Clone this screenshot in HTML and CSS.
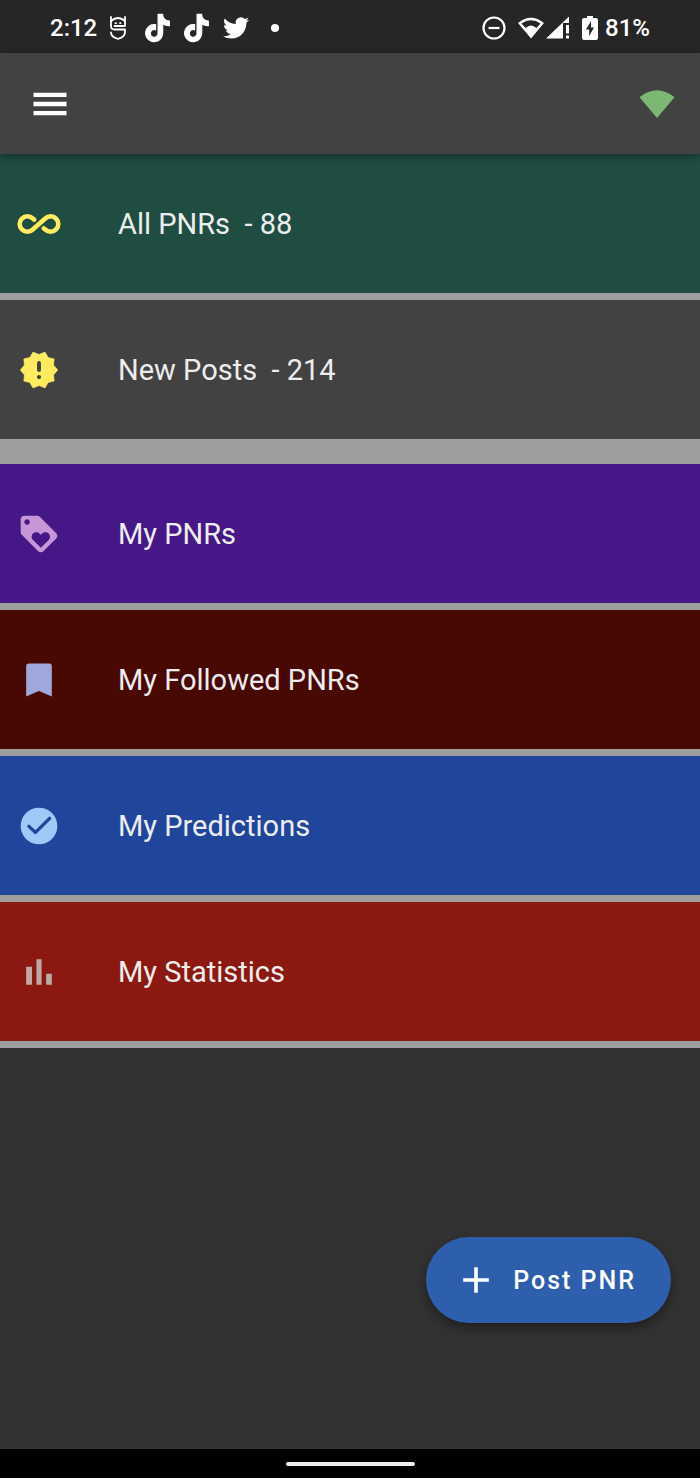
FILE: index.html
```html
<!DOCTYPE html>
<html lang="en">
<head>
<meta charset="utf-8">
<meta name="viewport" content="width=device-width, initial-scale=1">
<title>PNRs</title>
<link rel="stylesheet" href="styles.css">
</head>
<body>
<div class="status">
  <div class="status-left">
    <span class="clock">2:12</span>
    <svg class="helmet" viewBox="0 0 18 24" fill="none" stroke="#fff" stroke-width="1.800" stroke-linejoin="round" stroke-linecap="round"><path d="M2 1v9q0 3.500 3.500 3.500H16V16q0 5-7 6.800Q2 21 2 16.500"/><path d="M2 5Q9-1 16 5V1M16 5v5H5.500"/><path d="M6.500 7.200h.500M11 7.200h.500"/></svg>
    <svg class="tiktok" viewBox="1 0 22 24"><path d="M12.525.02c1.31-.02 2.61-.01 3.91-.02.08 1.53.63 3.09 1.75 4.17 1.12 1.11 2.7 1.62 4.24 1.79v4.03c-1.44-.05-2.89-.35-4.2-.97-.57-.26-1.1-.59-1.62-.93-.01 2.92.01 5.84-.02 8.75-.08 1.4-.54 2.79-1.35 3.94-1.31 1.92-3.58 3.17-5.91 3.21-1.43.08-2.86-.31-4.08-1.03-2.02-1.19-3.44-3.37-3.65-5.71-.02-.5-.03-1-.01-1.49.18-1.9 1.12-3.72 2.58-4.96 1.66-1.44 3.98-2.13 6.15-1.72.02 1.48-.04 2.96-.04 4.44-.99-.32-2.15-.23-3.02.37-.63.41-1.11 1.04-1.36 1.75-.21.51-.15 1.07-.14 1.61.24 1.64 1.82 3.02 3.5 2.87 1.12-.01 2.19-.66 2.77-1.61.19-.33.4-.67.41-1.06.1-1.79.06-3.57.07-5.36.01-4.03-.01-8.05.02-12.07z"/></svg>
    <svg class="tiktok" viewBox="1 0 22 24"><path d="M12.525.02c1.31-.02 2.61-.01 3.91-.02.08 1.53.63 3.09 1.75 4.17 1.12 1.11 2.7 1.62 4.24 1.79v4.03c-1.44-.05-2.89-.35-4.2-.97-.57-.26-1.1-.59-1.62-.93-.01 2.92.01 5.84-.02 8.75-.08 1.4-.54 2.79-1.35 3.94-1.31 1.92-3.58 3.17-5.91 3.21-1.43.08-2.86-.31-4.08-1.03-2.02-1.19-3.44-3.37-3.65-5.71-.02-.5-.03-1-.01-1.49.18-1.9 1.12-3.72 2.58-4.96 1.66-1.44 3.98-2.13 6.15-1.72.02 1.48-.04 2.96-.04 4.44-.99-.32-2.15-.23-3.02.37-.63.41-1.11 1.04-1.36 1.75-.21.51-.15 1.07-.14 1.61.24 1.64 1.82 3.02 3.5 2.87 1.12-.01 2.19-.66 2.77-1.61.19-.33.4-.67.41-1.06.1-1.79.06-3.57.07-5.36.01-4.03-.01-8.05.02-12.07z"/></svg>
    <svg class="bird" viewBox="0 0 24 24" fill="#fff"><path d="M23.953 4.57a10 10 0 01-2.825.775 4.958 4.958 0 002.163-2.723c-.951.555-2.005.959-3.127 1.184a4.92 4.92 0 00-8.384 4.482C7.69 8.095 4.067 6.13 1.64 3.162a4.822 4.822 0 00-.666 2.475c0 1.71.87 3.213 2.188 4.096a4.904 4.904 0 01-2.228-.616v.06a4.923 4.923 0 003.946 4.827 4.996 4.996 0 01-2.212.085 4.936 4.936 0 004.604 3.417 9.867 9.867 0 01-6.102 2.105c-.39 0-.779-.023-1.17-.067a13.995 13.995 0 007.557 2.209c9.053 0 13.998-7.496 13.998-13.985 0-.21 0-.42-.015-.63A9.935 9.935 0 0024 4.59z"/></svg>
    <span class="dot"></span>
  </div>
  <div class="status-right">
    <svg class="dnd" viewBox="0 0 24 24" fill="none" stroke="#fff" stroke-width="2.200"><circle cx="12" cy="12" r="10.500"/><path d="M6.500 12h11"/></svg>
    <svg class="signals" viewBox="0 0 54 24"><path d="M1 7Q14-3.500 27 7L14 22.500z" fill="#fff"/><path d="M4.500 7.500Q14 1 23.500 7.500L19.500 12Q14 7 8.500 12z" fill="#262626"/><path d="M29 22.500 52 .5V7h-6v15.500z" fill="#fff"/><path d="M49 9h3v8.500h-3zM49 19.500h3v3h-3z" fill="#fff"/></svg>
    <svg class="battery" viewBox="0 0 16 24"><path d="M5 0h6v2h3q2 0 2 2v18q0 2-2 2H2q-2 0-2-2V4q0-2 2-2h3z" fill="#fff"/><path d="M9 5 4 13.500h3.200V20L12 11.500H9z" fill="#262626"/></svg>
    <span class="level">81%</span>
  </div>
</div>

<header class="bar">
  <button class="menu" type="button" aria-label="Menu"><svg class="icon" viewBox="0 0 24 24" fill="#fff"><path d="M3 5.800h18v2.400H3zM3 10.800h18v2.400H3zM3 15.800h18v2.400H3z"/></svg></button>
  <svg class="wedge" viewBox="0 0 36 30" fill="#7cb874"><path d="M.500 8.200Q18-5.500 35.500 8.200L18 29z"/></svg>
</header>

<main class="content">
  <nav>
    <a class="row all" href="#all"><svg class="icon" viewBox="0 0 24 24" fill="none" stroke="#ffeb5f" stroke-width="2.500" stroke-linecap="round" stroke-linejoin="round"><path d="M9.400 9.600 8.600 9A4.200 4.200 0 1 0 8.600 15L15.400 9A4.200 4.200 0 1 1 15.400 15L14.600 14.400"/></svg><span>All PNRs&nbsp; - 88</span></a>
    <a class="row new" href="#new"><svg class="icon" viewBox="-.5 -.5 25 25"><path fill="#ffeb5f" stroke="#ffeb5f" stroke-width=".4" stroke-linejoin="round" d="M22.600 12l-2.340-2.780.34-3.480-3.410-.82-1.790-3.080L12 3.200 8.600 1.840 6.810 4.920l-3.410.81.34 3.480L1.400 12l2.340 2.780-.34 3.490 3.410.82 1.790 3.080L12 20.800l3.400 1.360 1.790-3.080 3.410-.82-.34-3.480z"/><path d="M12 8v4" stroke="#424242" stroke-width="2.200" stroke-linecap="round"/><circle cx="12" cy="16" r="1.200" fill="#424242"/></svg><span>New Posts&nbsp; - 214</span></a>
    <a class="row mine" href="#mine"><svg class="icon" viewBox="0 0 24 24" fill="#c696d6"><path d="M21.410 11.580l-9-9C12.050 2.220 11.550 2 11 2H4c-1.100 0-2 .9-2 2v7c0 .55.22 1.050.59 1.420l9 9c.36.36.86.58 1.410.58s1.050-.22 1.410-.59l7-7c.37-.36.59-.86.59-1.410s-.23-1.060-.59-1.420zM5.500 7C4.670 7 4 6.330 4 5.500S4.670 4 5.500 4 7 4.670 7 5.500 6.330 7 5.500 7zm11.770 8.270L13 19.540l-4.270-4.270C8.280 14.810 8 14.190 8 13.500c0-1.380 1.120-2.500 2.500-2.500.69 0 1.320.28 1.770.74l.73.72.73-.73c.45-.45 1.080-.73 1.770-.73 1.380 0 2.500 1.120 2.500 2.500 0 .69-.28 1.320-.73 1.770z"/></svg><span>My PNRs</span></a>
    <a class="row followed" href="#followed"><svg class="icon" viewBox="0 0 24 24" fill="#9fa8da"><path d="M17.500 3h-11Q5 3 5 4.500V21l7-3 7 3V4.500Q19 3 17.500 3z"/></svg><span>My Followed PNRs</span></a>
    <a class="row predictions" href="#predictions"><svg class="icon" viewBox="0 0 24 24"><circle cx="12" cy="12" r="10" fill="#9dcaf6"/><path d="M6.500 12.200 10.100 15.500 17.800 7.800" fill="none" stroke="#20469b" stroke-width="1.800" stroke-linecap="round" stroke-linejoin="round"/></svg><span>My Predictions</span></a>
    <a class="row statistics" href="#statistics"><svg class="icon" viewBox="0 0 24 24" fill="#bcaaa4"><path d="M5 9.200h3.200V19H5zM10.600 5h2.800v14h-2.800zM15.900 13H19v6h-3.100z"/></svg><span>My Statistics</span></a>
  </nav>
  <button class="post" type="button"><svg class="icon" viewBox="0 0 24 24" fill="#fff"><path d="M19 13h-6v6h-2v-6H5v-2h6V5h2v6h6z"/></svg><span>Post PNR</span></button>
</main>

<footer class="gesture"><span class="handle"></span></footer>
</body>
</html>
```
FILE: styles.css
```css
* { box-sizing: border-box; }

body {
  margin: 0;
  min-height: 100vh;
  display: flex;
  flex-direction: column;
  background: #323232;
  color: #ededed;
  font-family: Roboto, "Liberation Sans", sans-serif;
}

svg { display: block; flex: none; }

button {
  border: 0;
  padding: 0;
  font: inherit;
  color: #fff;
  background: none;
}

.icon { width: 44px; height: 44px; }

.status {
  height: 53px;
  padding: 2px 50px 0;
  display: flex;
  align-items: center;
  justify-content: space-between;
  background: #262626;
  color: #fff;
  font-size: 24px;
  font-weight: 500;
}

.status-left, .status-right { display: flex; align-items: center; }
.status-left { gap: 14px; }
.status-right { gap: 7px; }
.clock { margin-right: -2px; }
.helmet { width: 18px; height: 24px; margin-right: 4px; }
.tiktok { width: 25px; height: 28px; overflow: visible; fill: #fff; stroke: #fff; stroke-width: 1; }
.bird { width: 26px; height: 26px; }
.dot { width: 8px; height: 8px; margin-left: 8px; border-radius: 50%; background: #fff; }
.dnd { width: 24px; height: 24px; margin-right: 4px; }
.signals { width: 54px; height: 24px; margin-right: 4px; }
.battery { width: 16px; height: 24px; }

.bar {
  position: relative;
  z-index: 1;
  height: 101px;
  padding: 0 25px 0 28px;
  display: flex;
  align-items: center;
  justify-content: space-between;
  background: #424242;
  box-shadow: 0 2px 8px rgba(0, 0, 0, 0.4);
}

.wedge { width: 36px; height: 30px; }

.content { position: relative; flex: 1; }

.row {
  height: 146px;
  padding-left: 17px;
  display: flex;
  align-items: center;
  gap: 57px;
  border-bottom: 7px solid #9e9e9e;
  color: inherit;
  font-size: 29px;
  text-decoration: none;
}

.all { background: #1f4d42; }
.new { height: 164px; border-bottom-width: 25px; background: #424242; }
.mine { background: #451787; }
.followed { background: #480804; }
.predictions { background: #20469b; }
.statistics { background: #8c1911; }

.post {
  position: absolute;
  right: 29px;
  bottom: 126px;
  height: 86px;
  padding: 0 35px 0 28px;
  display: flex;
  align-items: center;
  gap: 15px;
  border-radius: 43px;
  background: #2e5fac;
  box-shadow: 0 5px 12px rgba(0, 0, 0, 0.4);
  font-size: 25px;
  font-weight: 500;
  letter-spacing: 2px;
}

.gesture {
  height: 29px;
  display: flex;
  align-items: center;
  justify-content: center;
  background: #000;
}

.handle { width: 129px; height: 4px; border-radius: 2px; background: #eee; }
```
